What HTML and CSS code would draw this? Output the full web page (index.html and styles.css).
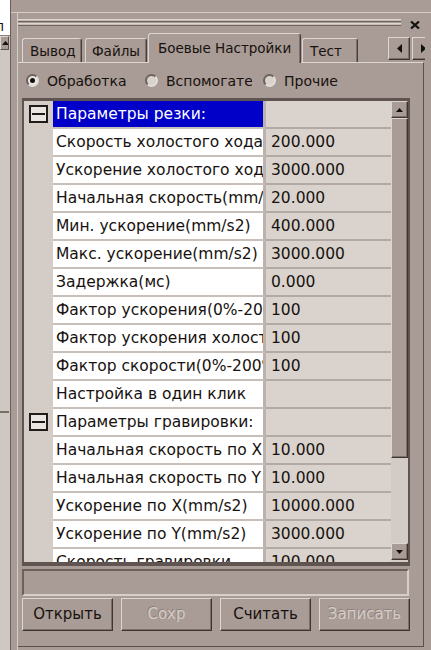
FILE: index.html
```html
<!DOCTYPE html>
<html lang="ru">
<head>
<meta charset="utf-8">
<title>Боевые Настройки</title>
<link rel="stylesheet" href="styles.css">
</head>
<body>
<div class="app">
  <div class="side">
    <div class="side-edit">п</div>
    <div class="side-btn"><svg width="7" height="4" viewBox="0 0 7 4"><path d="M3.5 0 L7 4 L0 4 Z" fill="#111"/></svg></div>
    <div class="side-track"><div class="side-thumb"></div></div>
  </div>
  <div class="dock">
    <div class="frame">
      <div class="titlebar">
        <div class="grip"><i></i><i></i></div>
        <div class="close"><svg width="10" height="8" viewBox="0 0 10 8"><path d="M1 0.5 L9 7.5 M9 0.5 L1 7.5" stroke="#111" stroke-width="2.2" fill="none"/></svg></div>
      </div>
      <div class="tabs">
        <div class="tab tab-out">Вывод</div>
        <div class="tab tab-files">Файлы</div>
        <div class="tab tab-active">Боевые Настройки</div>
        <div class="tab tab-test">Тест</div>
        <div class="tab-arrows">
          <div class="tab-arrow"><svg width="5" height="9" viewBox="0 0 5 9"><path d="M5 0 L0 4.5 L5 9 Z" fill="#111"/></svg></div>
          <div class="tab-arrow"><svg width="5" height="9" viewBox="0 0 5 9"><path d="M0 0 L5 4.5 L0 9 Z" fill="#111"/></svg></div>
        </div>
      </div>
      <div class="page">
        <div class="radios">
          <label class="radio radio-first"><span class="dot checked"></span><span class="rlabel">Обработка</span></label>
          <label class="radio radio-second"><span class="dot"></span><span class="rlabel clip">Вспомогательные</span></label>
          <label class="radio"><span class="dot"></span><span class="rlabel">Прочие</span></label>
        </div>
        <div class="grid">
          <div class="grid-body">
            <div class="row group selected"><div class="gut"><span class="minus"></span></div><div class="name">Параметры резки:</div><div class="val"></div></div>
            <div class="row"><div class="gut"></div><div class="name">Скорость холостого хода</div><div class="val">200.000</div></div>
            <div class="row"><div class="gut"></div><div class="name">Ускорение холостого хода</div><div class="val">3000.000</div></div>
            <div class="row"><div class="gut"></div><div class="name">Начальная скорость(mm/s)</div><div class="val">20.000</div></div>
            <div class="row"><div class="gut"></div><div class="name">Мин. ускорение(mm/s2)</div><div class="val">400.000</div></div>
            <div class="row"><div class="gut"></div><div class="name">Макс. ускорение(mm/s2)</div><div class="val">3000.000</div></div>
            <div class="row"><div class="gut"></div><div class="name">Задержка(мс)</div><div class="val">0.000</div></div>
            <div class="row"><div class="gut"></div><div class="name">Фактор ускорения(0%-200%)</div><div class="val">100</div></div>
            <div class="row"><div class="gut"></div><div class="name">Фактор ускорения холостого хода</div><div class="val">100</div></div>
            <div class="row"><div class="gut"></div><div class="name">Фактор скорости(0%-200%)</div><div class="val">100</div></div>
            <div class="row"><div class="gut"></div><div class="name">Настройка в один клик</div><div class="val"></div></div>
            <div class="row group"><div class="gut"><span class="minus"></span></div><div class="name">Параметры гравировки:</div><div class="val"></div></div>
            <div class="row"><div class="gut"></div><div class="name">Начальная скорость по X</div><div class="val">10.000</div></div>
            <div class="row"><div class="gut"></div><div class="name">Начальная скорость по Y</div><div class="val">10.000</div></div>
            <div class="row"><div class="gut"></div><div class="name">Ускорение по X(mm/s2)</div><div class="val">10000.000</div></div>
            <div class="row"><div class="gut"></div><div class="name">Ускорение по Y(mm/s2)</div><div class="val">3000.000</div></div>
            <div class="row"><div class="gut"></div><div class="name">Скорость гравировки</div><div class="val">100.000</div></div>
          </div>
          <div class="vscroll">
            <div class="sb-btn"><svg width="7" height="4" viewBox="0 0 7 4"><path d="M3.5 0 L7 4 L0 4 Z" fill="#111"/></svg></div>
            <div class="sb-thumb"></div>
            <div class="sb-track"></div>
            <div class="sb-btn"><svg width="7" height="4" viewBox="0 0 7 4"><path d="M0 0 L7 0 L3.5 4 Z" fill="#111"/></svg></div>
          </div>
        </div>
        <div class="status"></div>
        <div class="btns">
          <div class="btn">Открыть</div>
          <div class="btn disabled">Сохр</div>
          <div class="btn">Считать</div>
          <div class="btn disabled">Записать</div>
        </div>
      </div>
    </div>
  </div>
</div>
</body>
</html>
```

FILE: styles.css
```css
* { box-sizing: border-box; }
html, body { margin: 0; padding: 0; }
body {
  width: 431px;
  height: 650px;
  overflow: hidden;
  background: #a99b95;
  font-family: "DejaVu Sans", "Noto Sans", sans-serif;
  font-size: 14px;
  color: #17120f;
}
.app { display: flex; height: 650px; }

/* left strip (neighbouring window) */
.side {
  width: 11px;
  flex: none;
  border-right: 1px solid #6a5e59;
  display: flex;
  flex-direction: column;
  background: #cfc7c2;
}
.side-edit {
  height: 36px;
  background: #fff;
  overflow: hidden;
  line-height: 1;
  padding-top: 19px;
  text-indent: -5px;
  border-bottom: 1px solid #8d817c;
}
.side-btn {
  width: 9px;
  height: 14px;
  background: #a99b95;
  border: 1px solid;
  border-color: #ddd6d1 #5c514d #5c514d #ddd6d1;
  display: flex;
  align-items: center;
  justify-content: flex-end;
  overflow: hidden;
}
.side-btn svg { margin-right: -1px; flex: none; }
.side-track { flex: 1; }
.side-thumb { height: 363px; width: 9px; border-bottom: 2px solid #7a6e69; }

/* dock frame */
.dock {
  flex: 1;
  min-width: 0;
  margin-top: 12px;
  border-top: 1px solid #d4ccc7;
  padding-left: 6px;
  display: flex;
}
.frame {
  flex: 1;
  min-width: 0;
  border-left: 1px solid #d4ccc7;
  display: flex;
  flex-direction: column;
}
.titlebar {
  height: 20px;
  flex: none;
  display: flex;
  align-items: flex-start;
  padding-top: 6px;
}
.grip { width: 383px; display: flex; flex-direction: column; gap: 1px; }
.grip i {
  display: block;
  height: 3px;
  border-top: 1px solid #ddd6d1;
  border-bottom: 1px solid #6f635e;
  background: #c3bab5;
}
.close { margin-left: 9px; margin-top: 2px; width: 10px; height: 8px; display: flex; }

/* tabs */
.tabs {
  height: 29px;
  flex: none;
  display: flex;
  align-items: flex-end;
  padding-left: 4px;
  position: relative;
  z-index: 1;
}
.tab {
  height: 24px;
  border-top: 1px solid #ddd6d1;
  border-left: 1px solid #ddd6d1;
  border-right: 1px solid #463d3a;
  box-shadow: inset -1px 0 0 #7d716c;
  border-radius: 3px 3px 0 0;
  padding-left: 7px;
  line-height: 25px;
  font-size: 13.5px;
  white-space: nowrap;
  overflow: hidden;
  flex: none;
}
.tab-out { width: 60px; margin-right: 3px; }
.tab-files { width: 62px; margin-right: 1px; padding-left: 6px; }
.tab-active {
  width: 153px;
  height: 30px;
  margin-bottom: -1px;
  line-height: 28px;
  padding-left: 9px;
  background: #a99b95;
  margin-right: 1px;
}
.tab-test { width: 56px; }
.tab-arrows {
  margin-left: auto;
  margin-right: 6px;
  margin-bottom: 2px;
  width: 37px;
  height: 23px;
  display: flex;
  gap: 2px;
  overflow: hidden;
  flex: none;
}
.tab-arrow {
  width: 22px;
  height: 23px;
  flex: none;
  border: 1px solid;
  border-color: #ddd6d1 #463d3a #3a322f #ddd6d1;
  box-shadow: inset -1px -1px 0 #7d716c;
  display: flex;
  align-items: center;
  justify-content: center;
}

/* tab page */
.page {
  flex: 1;
  margin-right: 7px;
  margin-bottom: 3px;
  border-top: 1px solid #ddd6d1;
  border-right: 1px solid #5a4f4b;
  border-bottom: 1px solid #5a4f4b;
  padding: 0 12px 0 4px;
  display: flex;
  flex-direction: column;
}
.radios {
  height: 35px;
  flex: none;
  display: flex;
  align-items: center;
  padding-left: 4px;
}
.radio { display: flex; align-items: center; flex: none; }
.radio-first { width: 119px; }
.radio-second { width: 118px; }
.dot {
  width: 13px;
  height: 13px;
  border-radius: 50%;
  border: 2px solid;
  border-color: #6d625d #e3ddd9 #e3ddd9 #6d625d;
  background: #d9d2cd;
  display: flex;
  align-items: center;
  justify-content: center;
  flex: none;
}
.dot.checked { background: #ebe6e2; }
.dot.checked::after {
  content: "";
  width: 5px;
  height: 5px;
  border-radius: 50%;
  background: #111;
}
.rlabel { margin-left: 8px; white-space: nowrap; font-size: 14px; }
.rlabel.clip { width: 86px; overflow: hidden; }

/* property grid */
.grid {
  height: 468px;
  flex: none;
  width: 388px;
  border: 2px solid #5f5450;
  border-top-width: 3px;
  border-bottom-width: 4px;
  display: flex;
  background: #d4ccc7;
}
.grid-body { flex: 1; overflow: hidden; }
.row {
  display: grid;
  grid-template-columns: 29px 213px 1fr;
  height: 28px;
}
.gut {
  background: #d4ccc7;
  display: flex;
  align-items: center;
  justify-content: center;
  padding-bottom: 2px;
}
.minus {
  width: 19px;
  height: 18px;
  border: 2px solid #221c19;
  background: #e9e5e2;
  display: flex;
  align-items: center;
  justify-content: center;
}
.minus::before { content: ""; width: 13px; height: 2px; background: #221c19; }
.name {
  background: #fff;
  border-bottom: 2px solid #c7bfba;
  border-right: 3px solid #bcb2ad;
  padding-left: 3px;
  line-height: 26px;
  font-size: 15.5px;
  white-space: nowrap;
  overflow: hidden;
}
.selected .name { background: #0000c8; color: #fff; }
.val {
  background: #d9d2cd;
  border-bottom: 2px solid #b3a9a4;
  padding-left: 5px;
  line-height: 26px;
  font-size: 15.5px;
  white-space: nowrap;
  overflow: hidden;
}
.vscroll {
  width: 17px;
  flex: none;
  display: flex;
  flex-direction: column;
  padding-bottom: 2px;
  background: #d3cbc6;
}
.sb-btn {
  height: 17px;
  flex: none;
  background: #a99b95;
  border: 1px solid;
  border-color: #ddd6d1 #3f3633 #3f3633 #ddd6d1;
  box-shadow: inset -1px -1px 0 #7d716c;
  display: flex;
  align-items: center;
  justify-content: center;
}
.sb-thumb {
  height: 340px;
  flex: none;
  background: #a99b95;
  border: 1px solid;
  border-color: #ddd6d1 #3f3633 #3f3633 #ddd6d1;
  box-shadow: inset -1px -1px 0 #7d716c;
}
.sb-track { flex: 1; }

/* status + buttons */
.status {
  margin-top: 3px;
  height: 27px;
  width: 387px;
  flex: none;
  border: 2px solid;
  border-color: #6c605b #d6cfca #d6cfca #6c605b;
}
.btns {
  margin-top: 2px;
  height: 33px;
  width: 388px;
  flex: none;
  display: grid;
  grid-template-columns: repeat(4, 1fr);
  gap: 8px;
}
.btn {
  border: 1px solid;
  border-color: #ddd6d1 #3e3532 #3e3532 #ddd6d1;
  box-shadow: inset -1px -1px 0 #7b6f6a;
  display: flex;
  align-items: center;
  justify-content: center;
  font-size: 15px;
  padding-bottom: 1px;
}
.btn.disabled {
  color: #d3ccc7;
  text-shadow: -1px -1px 0 rgba(110, 98, 92, 0.45);
}
```
